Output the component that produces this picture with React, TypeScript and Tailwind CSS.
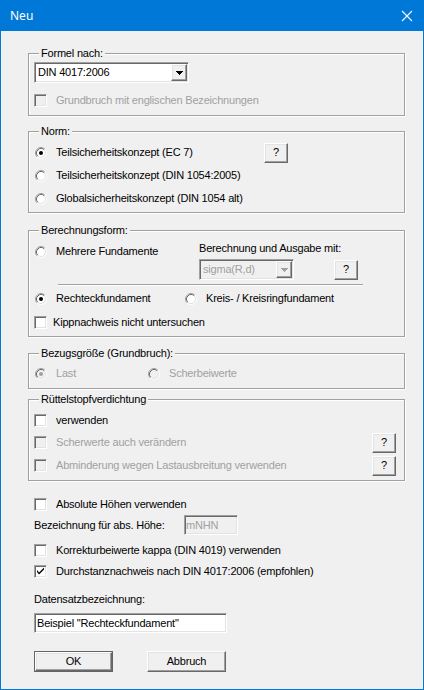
import React from "react";

const sunken =
  "border border-t-[#a0a0a0] border-l-[#a0a0a0] border-b-white border-r-white shadow-[inset_1px_1px_0_#696969,inset_-1px_-1px_0_#e3e3e3]";
const raised =
  "border border-t-white border-l-white border-b-[#696969] border-r-[#696969] shadow-[inset_-1px_-1px_0_#a0a0a0,inset_1px_1px_0_#e3e3e3] bg-[#f0f0f0]";

function Radio({ checked = false, disabled = false }: { checked?: boolean; disabled?: boolean }) {
  return (
    <svg width="12" height="12" viewBox="0 0 12 12" className="shrink-0">
      <circle cx="6" cy="6" r="4.5" fill={disabled ? "#f0f0f0" : "#ffffff"} />
      <path d="M2.11 9.89 A5.5 5.5 0 0 1 9.89 2.11" fill="none" stroke="#a0a0a0" strokeWidth="1" />
      <path d="M2.82 9.18 A4.5 4.5 0 0 1 9.18 2.82" fill="none" stroke="#696969" strokeWidth="1" />
      <path d="M9.89 2.11 A5.5 5.5 0 0 1 2.11 9.89" fill="none" stroke="#ffffff" strokeWidth="1" />
      <path d="M9.18 2.82 A4.5 4.5 0 0 1 2.82 9.18" fill="none" stroke="#e3e3e3" strokeWidth="1" />
      {checked && <circle cx="6" cy="6" r="2" fill={disabled ? "#a0a0a0" : "#000000"} />}
    </svg>
  );
}

function Check({ checked = false, disabled = false }: { checked?: boolean; disabled?: boolean }) {
  return (
    <div
      className={`relative w-[13px] h-[13px] shrink-0 ${sunken} ${disabled ? "bg-[#f0f0f0]" : "bg-white"}`}
    >
      {checked && (
        <svg width="13" height="13" viewBox="0 0 13 13" className="absolute -left-px -top-px">
          <path d="M3 5 L5 7.5 L10 2.5 L10 4.5 L5 9.5 L3 7 Z" fill="#000" />
        </svg>
      )}
    </div>
  );
}

function Arrow({ color = "#000" }: { color?: string }) {
  return (
    <svg width="7" height="4" viewBox="0 0 7 4" shapeRendering="crispEdges">
      <path d="M0 0h7v1h-1v1h-1v1h-1v1h-1v-1h-1v-1h-1v-1h-1z" fill={color} />
    </svg>
  );
}

function QButton() {
  return (
    <div className={`w-[24px] h-[20px] flex items-center justify-center shrink-0 ${raised}`}>
      <span className="leading-none">?</span>
    </div>
  );
}

function Group({
  label,
  className,
  children,
}: {
  label: string;
  className: string;
  children: React.ReactNode;
}) {
  return (
    <div
      className={`relative ml-[27px] w-[377px] border border-[#a0a0a0] shadow-[inset_1px_1px_0_#fff,1px_1px_0_#fff] ${className}`}
    >
      <div className="absolute -top-[7px] left-[10px] px-[2px] bg-[#f0f0f0] leading-[13px] h-[13px]">
        {label}
      </div>
      {children}
    </div>
  );
}

export default function App() {
  const gray = "text-[#a0a0a0]";
  return (
    <div className="w-[424px] h-[690px] bg-[#0078d7] px-px pb-px flex flex-col font-['Liberation_Sans',Arial,sans-serif] text-[11px] tracking-[-0.2px] text-black leading-none">
      {/* Title bar */}
      <div className="h-[31px] shrink-0 flex items-center justify-between pl-[9px] pr-[10px] text-white">
        <span className="font-['Noto_Sans',sans-serif] text-[12px] tracking-normal leading-none">Neu</span>
        <svg width="12" height="12" viewBox="0 0 12 12">
          <path d="M1 1 L11 11 M11 1 L1 11" stroke="#ffffff" strokeWidth="1.1" />
        </svg>
      </div>

      {/* Body */}
      <div className="flex-1 bg-[#f0f0f0] flex flex-col">
        {/* Formel nach */}
        <Group label="Formel nach:" className="mt-[22px] h-[63px] pt-[8px] pl-[5px]">
          <div className={`w-[155px] h-[21px] bg-white flex items-center ${sunken}`}>
            <span className="flex-1 pl-[3px]">DIN 4017:2006</span>
            <div className={`w-[16px] h-[17px] mr-px flex items-center justify-center ${raised}`}>
              <Arrow />
            </div>
          </div>
          <div className="mt-[11px] h-[13px] flex items-center">
            <Check disabled />
            <span className={`ml-[9px] ${gray}`}>Grundbruch mit englischen Bezeichnungen</span>
          </div>
        </Group>

        {/* Norm */}
        <Group label="Norm:" className="mt-[15px] h-[82px] pt-[9px] pl-[6px]">
          <div className="h-[23px] flex items-center">
            <Radio checked />
            <span className="ml-[9px] w-[208px]">Teilsicherheitskonzept (EC 7)</span>
            <QButton />
          </div>
          <div className="h-[23px] flex items-center">
            <Radio />
            <span className="ml-[9px]">Teilsicherheitskonzept (DIN 1054:2005)</span>
          </div>
          <div className="h-[23px] flex items-center">
            <Radio />
            <span className="ml-[9px]">Globalsicherheitskonzept (DIN 1054 alt)</span>
          </div>
        </Group>

        {/* Berechnungsform */}
        <Group label="Berechnungsform:" className="mt-[17px] h-[107px] pt-[10px]">
          <div className="flex items-start">
            <div className="w-[170px] h-[21px] pl-[6px] flex items-center">
              <Radio />
              <span className="ml-[9px]">Mehrere Fundamente</span>
            </div>
            <div className="flex flex-col">
              <div className="h-[14px] leading-[14px]">Berechnung und Ausgabe mit:</div>
              <div className="mt-[4px] flex items-center">
                <div className={`w-[95px] h-[21px] bg-[#f0f0f0] flex items-center ${sunken}`}>
                  <span className={`flex-1 pl-[3px] ${gray}`}>sigma(R,d)</span>
                  <div className={`w-[16px] h-[17px] mr-px flex items-center justify-center ${raised}`}>
                    <Arrow color="#a0a0a0" />
                  </div>
                </div>
                <div className="ml-[40px]">
                  <QButton />
                </div>
              </div>
            </div>
          </div>
          <div className="mt-[4px] ml-[29px] w-[305px] h-[2px] border-t border-t-[#a0a0a0] border-b border-b-white" />
          <div className="mt-[2px] h-[21px] pl-[6px] flex items-center">
            <Radio checked />
            <span className="ml-[9px] w-[129px]">Rechteckfundament</span>
            <Radio />
            <span className="ml-[9px]">Kreis- / Kreisringfundament</span>
          </div>
          <div className="mt-[3px] h-[21px] pl-[5px] flex items-center">
            <Check />
            <span className="ml-[6px]">Kippnachweis nicht untersuchen</span>
          </div>
        </Group>

        {/* Bezugsgröße */}
        <Group label="Bezugsgröße (Grundbruch):" className="mt-[16px] h-[36px] pt-[9px] pl-[6px]">
          <div className="h-[21px] flex items-center">
            <Radio checked disabled />
            <span className={`ml-[9px] w-[92px] ${gray}`}>Last</span>
            <Radio disabled />
            <span className={`ml-[9px] ${gray}`}>Scherbeiwerte</span>
          </div>
        </Group>

        {/* Rüttelstopfverdichtung */}
        <Group label="Rüttelstopfverdichtung" className="mt-[10px] h-[82px] pt-[10px] pl-[5px]">
          <div className="h-[21px] flex items-center">
            <Check />
            <span className="ml-[9px]">verwenden</span>
          </div>
          <div className="mt-[1px] h-[21px] flex items-center">
            <Check disabled />
            <span className={`ml-[9px] w-[316px] ${gray}`}>Scherwerte auch verändern</span>
            <QButton />
          </div>
          <div className="mt-[2px] h-[21px] flex items-center">
            <Check disabled />
            <span className={`ml-[9px] w-[316px] ${gray}`}>
              Abminderung wegen Lastausbreitung verwenden
            </span>
            <QButton />
          </div>
        </Group>

        {/* Lower section */}
        <div className="ml-[33px] flex flex-col">
          <div className="mt-[13px] h-[21px] flex items-center">
            <Check />
            <span className="ml-[9px]">Absolute Höhen verwenden</span>
          </div>
          <div className="h-[20px] flex items-center">
            <span className="w-[150px]">Bezeichnung für abs. Höhe:</span>
            <div className={`w-[54px] h-[20px] bg-[#f0f0f0] flex items-center ${sunken}`}>
              <span className={`pl-[1px] ${gray}`}>mNHN</span>
            </div>
          </div>
          <div className="mt-[5px] h-[21px] flex items-center">
            <Check />
            <span className="ml-[9px]">Korrekturbeiwerte kappa (DIN 4019) verwenden</span>
          </div>
          <div className="h-[21px] flex items-center">
            <Check checked />
            <span className="ml-[9px]">Durchstanznachweis nach DIN 4017:2006 (empfohlen)</span>
          </div>
          <div className="mt-[10px] h-[14px] leading-[14px]">Datensatzbezeichnung:</div>
          <div className={`mt-[7px] w-[193px] h-[20px] bg-white flex items-center ${sunken}`}>
            <span className="pl-[2px]">Beispiel "Rechteckfundament"</span>
          </div>
          <div className="mt-[18px] flex">
            <div className="w-[79px] h-[21px] border border-[#646464]">
              <div className={`w-full h-full flex items-center justify-center ${raised}`}>OK</div>
            </div>
            <div className={`ml-[34px] w-[79px] h-[21px] flex items-center justify-center ${raised}`}>
              Abbruch
            </div>
          </div>
        </div>
      </div>
    </div>
  );
}
